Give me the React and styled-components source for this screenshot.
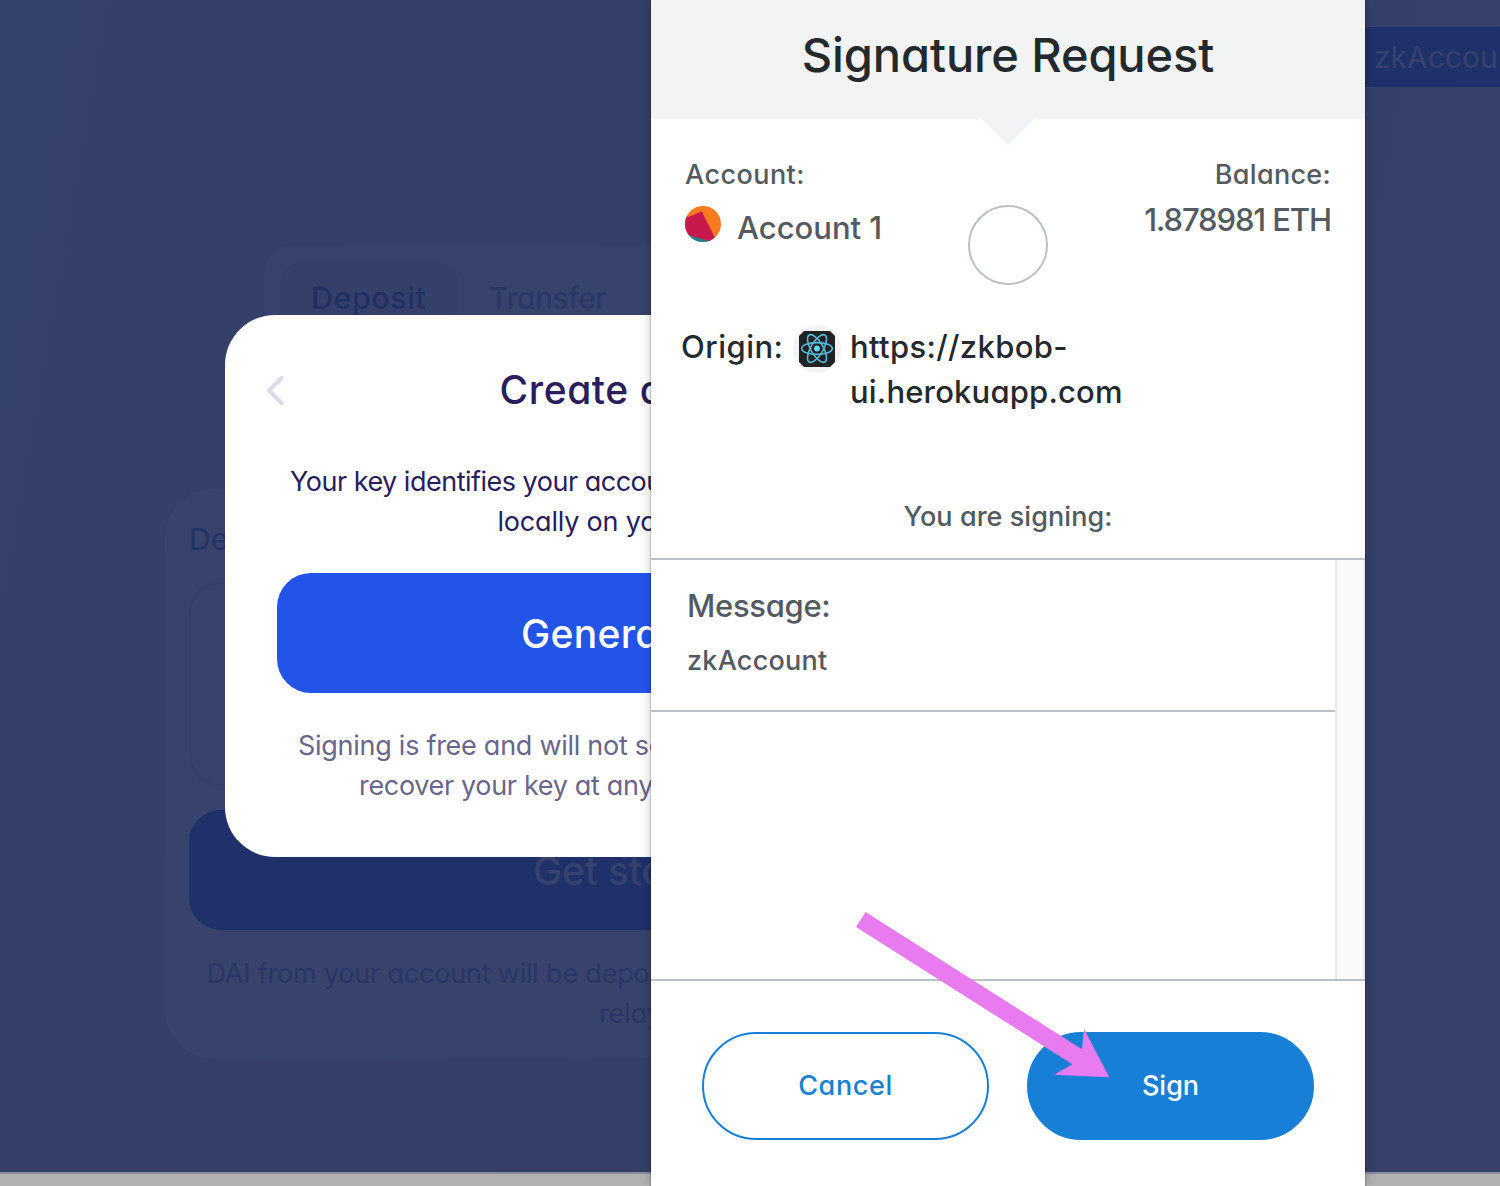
import React from 'react';
import styled, { createGlobalStyle } from 'styled-components';

const GlobalStyle = createGlobalStyle`
  *, *::before, *::after { box-sizing: border-box; }
  body { margin: 0; background: #354069; overflow: hidden; }
`;

const Screen = styled.div`
  position: relative;
  width: 1500px;
  height: 1186px;
  overflow: hidden;
  font-family: Inter, 'Liberation Sans', sans-serif;
  font-feature-settings: 'cv11';
  background: #354069;
`;

const Text = styled.div`
  padding-top: ${(p) => (p.$drop || 0) * 2}px;
  font-size: ${(p) => p.$size || 27}px;
  font-weight: ${(p) => p.$weight || 400};
  letter-spacing: ${(p) => p.$track || 0}px;
  line-height: ${(p) => (p.$line || 40) - (p.$drop || 0) * 2}px;
  color: ${(p) => p.$color};
  margin-left: ${(p) => p.$indent || 0}px;
  white-space: nowrap;
`;

/* ---------- page behind the overlay ---------- */

const Page = styled.div`
  display: flex;
  flex-direction: column;
  height: 1186px;
  background: linear-gradient(100deg, #34416a 0%, #353f69 30%, #34406a 60%, #35416b 100%);
`;

const TopBar = styled.header`
  display: flex;
  justify-content: flex-end;
  padding-top: 27px;
  height: 246px;
`;

const AccountButton = styled.div`
  width: 149px;
  height: 60px;
  padding: 9px 0 0 23px;
  border-radius: 16px 0 0 16px;
  background: #20306a;
  overflow: hidden;
`;

const Tabs = styled.nav`
  display: flex;
  width: 762px;
  height: 104px;
  margin-left: 264px;
  padding: 17px 16px;
  border-radius: 30px;
  background: #37436d;
`;

const Tab = styled.div`
  width: 178px;
  height: 70px;
  padding-top: 14px;
  padding-left: 31px;
  border-radius: 20px;
  background: ${(p) => (p.$active ? '#35406a' : 'transparent')};
`;

const Card = styled.section`
  width: 960px;
  height: 569px;
  margin: 139px 0 0 165px;
  padding: 29px 24px 0;
  border-radius: 48px;
  background: #37436c;
`;

const AmountBox = styled.div`
  height: 204px;
  margin: 24px 0;
  border: 2px solid #343f6a;
  border-radius: 32px;
`;

const StartButton = styled.div`
  height: 120px;
  margin-bottom: 23px;
  padding-top: 41px;
  border-radius: 32px;
  background: #20306a;
`;

const Footer = styled.div`
  margin-top: auto;
  height: 14px;
  background: #b1b1b1;
  border-top: 2px solid #8a8d9c;
`;

/* ---------- key dialog ---------- */

const Dialog = styled.section`
  position: absolute;
  left: 225px;
  top: 314.5px;
  width: 840px;
  height: 542.5px;
  padding: 55.5px 52px 0;
  border-radius: 50px;
  background: #fff;
`;

const DialogHead = styled.div`
  display: flex;
  align-items: center;
  height: 40px;
  margin: 0 0 51px -12px;
`;

const GenerateButton = styled.div`
  height: 120px;
  margin: 32px 0;
  padding-top: 41px;
  border-radius: 34px;
  background: #2354e8;
`;

/* ---------- wallet popup ---------- */

const Popup = styled.main`
  position: absolute;
  left: 651px;
  top: 0;
  width: 714px;
  height: 1186px;
  background: #fff;
  box-shadow: 0 0 0 1px rgba(0, 0, 0, 0.14), 0 0 10px rgba(0, 0, 0, 0.24);
`;

const PopupHead = styled.header`
  position: relative;
  display: flex;
  justify-content: center;
  height: 119px;
  padding-top: 25px;
  background: #f2f3f5;

  &::after {
    content: '';
    position: absolute;
    top: 100%;
    left: 331px;
    width: 52px;
    height: 26px;
    background: #f2f3f5;
    clip-path: polygon(0 0, 100% 0, 50% 100%);
  }
`;

const Summary = styled.div`
  display: grid;
  grid-template-columns: 1fr 80px 1fr;
  height: 205px;
  padding: 35px 34px 0;
`;

const Column = styled.div`
  display: flex;
  flex-direction: column;
  align-items: ${(p) => (p.$end ? 'flex-end' : 'flex-start')};
  gap: ${(p) => p.$gap}px;
`;

const AccountLine = styled.div`
  display: flex;
  gap: 16px;

  svg { margin-top: -2px; }
`;

const Ring = styled.div`
  width: 80px;
  height: 80px;
  margin-top: 51px;
  border: 2px solid #bbc0c5;
  border-radius: 50%;
`;

const Origin = styled.div`
  display: flex;
  height: 172px;
  padding-left: 30px;
`;

const OriginLabel = styled.div`
  width: 112px;
`;

const SiteIcon = styled.div`
  display: flex;
  align-items: center;
  justify-content: center;
  width: 48px;
  height: 48px;
  margin: 1px 9px 0 0;
  border-radius: 50%;
  background: #f2f3f5;
`;

const SigningLabel = styled.div`
  display: flex;
  justify-content: center;
  height: 62px;
`;

const MessageArea = styled.div`
  display: flex;
  height: 423px;
  border-top: 2px solid #bbc0c5;
  border-bottom: 2px solid #bbc0c5;
`;

const MessageList = styled.div`
  flex: 1;
`;

const MessageItem = styled.div`
  height: 152px;
  padding: 26px 36px 0;
  border-bottom: 2px solid #bbc0c5;
`;

const Scrollbar = styled.div`
  width: 30px;
  border: solid #e8e8e8;
  border-width: 0 2px;
  background: #fafafa;
`;

const Actions = styled.div`
  display: flex;
  gap: 38px;
  padding: 51px 51px 0;
`;

const Action = styled.button`
  display: flex;
  justify-content: center;
  flex: 1;
  height: 108px;
  padding: 31px 0 0;
  border: 2px solid #1780d6;
  border-radius: 54px;
  background: ${(p) => (p.$primary ? '#1780d6' : '#fff')};
  font-family: inherit;
  font-feature-settings: inherit;
`;

const PointerArrow = styled.svg`
  position: absolute;
  left: 850px;
  top: 905px;
`;

const ink = '#24292e';
const slate = '#535a61';
const indigo = '#291e5b';
const muted = '#6b658b';
const dimText = '#2a3668';

function BackIcon() {
  return (
    <svg width="22" height="32" viewBox="0 0 22 32" fill="none">
      <path d="M16.500 4 4 16.500l12.500 12.500" stroke="#dddaec" strokeWidth="4.200" strokeLinecap="round" strokeLinejoin="round" />
    </svg>
  );
}

function Identicon() {
  return (
    <svg width="36" height="36" viewBox="0 0 36 36">
      <clipPath id="disc"><circle cx="18" cy="18" r="18" /></clipPath>
      <g clipPath="url(#disc)">
        <rect width="36" height="36" fill="#fa7a20" />
        <path d="M0 7 3 11 0 14ZM0 27 5 29 27 35.500V36H0Z" fill="#18868f" />
        <path d="M0 12.600 16.700 5.300 29.800 31.500 25 35.500 5 29.500 0 28Z" fill="#c8194d" />
      </g>
    </svg>
  );
}

function ReactIcon() {
  return (
    <svg width="36" height="36" viewBox="0 0 36 36">
      <path d="M5 0h26l5 5v26l-5 5H5l-5-5V5Z" fill="#222" />
      <g fill="none" stroke="#53b9d6" strokeWidth="1.600">
        <ellipse cx="18" cy="17.500" rx="15.300" ry="5.900" />
        <ellipse cx="18" cy="17.500" rx="15.600" ry="6.200" transform="rotate(60 18 17.500)" />
        <ellipse cx="18" cy="17.500" rx="15.600" ry="6.200" transform="rotate(120 18 17.500)" />
      </g>
      <circle cx="18" cy="17.500" r="2.900" fill="#61dafb" />
    </svg>
  );
}

export default function App() {
  return (
    <Screen>
      <GlobalStyle />
      <Page>
        <TopBar>
          <AccountButton>
            <Text $size={30} $drop={1} $color="#36426c">zkAccount</Text>
          </AccountButton>
        </TopBar>
        <Tabs>
          <Tab $active>
            <Text $size={30.5} $drop={1} $weight={500} $track={0.5} $color="#222f65">Deposit</Text>
          </Tab>
          <Tab>
            <Text $size={30} $drop={1} $weight={500} $track={-0.5} $color="#2b3767">Transfer</Text>
          </Tab>
        </Tabs>
        <Card>
          <Text $size={30} $drop={1} $color="#253265">Deposit</Text>
          <AmountBox />
          <StartButton>
            <Text $size={39} $weight={500} $track={-0.2} $color="#36426c" $indent={344}>Get started</Text>
          </StartButton>
          <Text $drop={1} $track={-0.2} $color={dimText} $indent={17.5}>DAI from your account will be deposited</Text>
          <Text $drop={1} $track={-0.2} $color={dimText} $indent={410}>relayer</Text>
        </Card>
        <Footer />
      </Page>

      <Dialog>
        <DialogHead>
          <BackIcon />
          <Text $size={39} $weight={500} $track={0.6} $color={indigo} $indent={212.5}>Create a key</Text>
        </DialogHead>
        <Text $drop={1} $track={-0.5} $color={indigo} $indent={13}>Your key identifies your account</Text>
        <Text $drop={1} $track={-0.2} $color={indigo} $indent={220.5}>locally on your</Text>
        <GenerateButton>
          <Text $size={39} $weight={500} $track={0.3} $color="#fff" $indent={244}>Generate</Text>
        </GenerateButton>
        <Text $drop={1} $track={-0.27} $color={muted} $indent={21}>Signing is free and will not send</Text>
        <Text $drop={1} $track={-0.33} $color={muted} $indent={82}>recover your key at any time</Text>
      </Dialog>

      <Popup>
        <PopupHead>
          <Text $size={47} $weight={500} $track={-0.1} $line={60} $color={ink}>Signature Request</Text>
        </PopupHead>
        <Summary>
          <Column $gap={14}>
            <Text $drop={1} $weight={500} $track={0.45} $color={slate}>Account:</Text>
            <AccountLine>
              <Identicon />
              <Text $size={31} $weight={500} $color={slate}>Account 1</Text>
            </AccountLine>
          </Column>
          <Ring />
          <Column $gap={6} $end>
            <Text $drop={1} $weight={500} $track={0.3} $color={slate}>Balance:</Text>
            <Text $size={31} $weight={500} $track={-1.1} $color={slate}>1.878981 ETH</Text>
          </Column>
        </Summary>
        <Origin>
          <OriginLabel>
            <Text $size={31} $weight={500} $track={0.5} $line={45} $color={ink}>Origin:</Text>
          </OriginLabel>
          <SiteIcon><ReactIcon /></SiteIcon>
          <div>
            <Text $size={31} $weight={500} $track={0.35} $line={45} $color={ink}>https://zkbob-</Text>
            <Text $size={31} $weight={500} $track={0.18} $line={45} $color={ink}>ui.herokuapp.com</Text>
          </div>
        </Origin>
        <SigningLabel>
          <Text $drop={1} $weight={500} $track={0.05} $color={slate}>You are signing:</Text>
        </SigningLabel>
        <MessageArea>
          <MessageList>
            <MessageItem>
              <Text $size={31} $weight={500} $track={-0.3} $color={slate}>Message:</Text>
              <Text $drop={1} $weight={500} $track={0.25} $line={68} $color={slate}>zkAccount</Text>
            </MessageItem>
          </MessageList>
          <Scrollbar />
        </MessageArea>
        <Actions>
          <Action>
            <Text $drop={1} $weight={500} $track={0.6} $color="#1780d6">Cancel</Text>
          </Action>
          <Action $primary>
            <Text $drop={1} $weight={500} $color="#fff">Sign</Text>
          </Action>
        </Actions>
      </Popup>

      <PointerArrow width="270" height="180" viewBox="850 905 270 180">
        <path d="M865.500 912 1082 1049.300 1084 1028.700 1109.300 1077.300 1054 1074.700 1072.300 1064.300 856 927Z" fill="#e87bef" />
      </PointerArrow>
    </Screen>
  );
}
